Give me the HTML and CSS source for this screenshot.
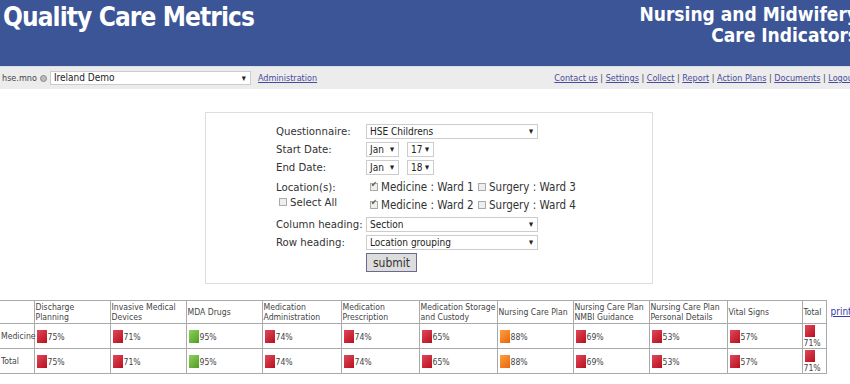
FILE: index.html
```html
<!DOCTYPE html>
<html lang="en">
<head>
    <meta charset="UTF-8">
    <title>Quality Care Metrics</title>
    <link rel="stylesheet" href="styles.css">
</head>
<body>
<div class="page">
    <div class="header">
        <div class="title">Quality Care Metrics</div>
        <div class="subtitle">Nursing and Midwifery<br>Care Indicators</div>
    </div>

    <div class="navbar">
        <div class="nav-left">
            <span>hse.mno</span>
            <span class="globe"></span>
            <span class="select wide">Ireland Demo</span>
            <a href="#">Administration</a>
        </div>
        <div class="nav-right">
            <a href="#">Contact us</a> | <a href="#">Settings</a> | <a href="#">Collect</a> | <a href="#">Report</a> | <a href="#">Action Plans</a> | <a href="#">Documents</a> | <a href="#">Logout</a>
        </div>
    </div>

    <form class="report-form">
        <div class="row">
            <label>Questionnaire:</label>
            <span class="select big">HSE Childrens</span>
        </div>
        <div class="row">
            <label>Start Date:</label>
            <span class="select month">Jan</span>
            <span class="select year">17</span>
        </div>
        <div class="row">
            <label>End Date:</label>
            <span class="select month">Jan</span>
            <span class="select year">18</span>
        </div>
        <div class="row locations">
            <div class="loc-label">
                <div>Location(s):</div>
                <div class="select-all"><span class="cb"></span>Select All</div>
            </div>
            <div class="loc-grid">
                <div><span class="cb on"></span>Medicine : Ward 1</div>
                <div><span class="cb"></span>Surgery : Ward 3</div>
                <div><span class="cb on"></span>Medicine : Ward 2</div>
                <div><span class="cb"></span>Surgery : Ward 4</div>
            </div>
        </div>
        <div class="row">
            <label>Column heading:</label>
            <span class="select big">Section</span>
        </div>
        <div class="row">
            <label>Row heading:</label>
            <span class="select big">Location grouping</span>
        </div>
        <div class="row">
            <label></label>
            <button type="button">submit</button>
        </div>
    </form>

    <div class="results">
        <table>
            <colgroup>
                <col style="width:34px"><col style="width:76px"><col style="width:76px"><col style="width:76px">
                <col style="width:79px"><col style="width:78px"><col style="width:78px"><col style="width:76px">
                <col style="width:76px"><col style="width:78px"><col style="width:75px"><col style="width:24px">
            </colgroup>
            <tr>
                <th></th>
                <th>Discharge Planning</th>
                <th>Invasive Medical Devices</th>
                <th>MDA Drugs</th>
                <th>Medication Administration</th>
                <th>Medication Prescription</th>
                <th>Medication Storage and Custody</th>
                <th>Nursing Care Plan</th>
                <th>Nursing Care Plan NMBI Guidance</th>
                <th>Nursing Care Plan Personal Details</th>
                <th>Vital Signs</th>
                <th>Total</th>
            </tr>
            <tr>
                <td class="rowhead">Medicine</td>
                <td><span class="sw red"></span>75%</td>
                <td><span class="sw red"></span>71%</td>
                <td><span class="sw green"></span>95%</td>
                <td><span class="sw red"></span>74%</td>
                <td><span class="sw red"></span>74%</td>
                <td><span class="sw red"></span>65%</td>
                <td><span class="sw orange"></span>88%</td>
                <td><span class="sw red"></span>69%</td>
                <td><span class="sw red"></span>53%</td>
                <td><span class="sw red"></span>57%</td>
                <td class="total"><span class="sw red"></span>71%</td>
            </tr>
            <tr>
                <td class="rowhead">Total</td>
                <td><span class="sw red"></span>75%</td>
                <td><span class="sw red"></span>71%</td>
                <td><span class="sw green"></span>95%</td>
                <td><span class="sw red"></span>74%</td>
                <td><span class="sw red"></span>74%</td>
                <td><span class="sw red"></span>65%</td>
                <td><span class="sw orange"></span>88%</td>
                <td><span class="sw red"></span>69%</td>
                <td><span class="sw red"></span>53%</td>
                <td><span class="sw red"></span>57%</td>
                <td class="total"><span class="sw red"></span>71%</td>
            </tr>
        </table>
        <a href="#" class="print">print</a>
    </div>
</div>
</body>
</html>
```

FILE: styles.css
```css
html {
    overflow: hidden;
}

body {
    margin: 0;
    font-family: "DejaVu Sans Condensed", "DejaVu Sans", sans-serif;
    color: #333;
    background: #fff;
}

.page {
    width: 858px;
}

.header {
    height: 66px;
    background-color: #3b5597;
    color: #fff;
    display: flex;
    justify-content: space-between;
    font-weight: bold;
}

.title {
    font-size: 26px;
    letter-spacing: -0.9px;
    padding: 2px 0 0 3px;
}

.subtitle {
    font-size: 19px;
    line-height: 21px;
    text-align: right;
    padding: 4px 0 0 0;
}

.navbar {
    height: 22px;
    border-top: 1px solid #d9dee8;
    background-color: #ececec;
    display: flex;
    justify-content: space-between;
    align-items: center;
    font-size: 9px;
    color: #444;
}

.navbar a {
    color: #4b4b9c;
}

.nav-left {
    display: flex;
    align-items: center;
    padding-left: 2px;
}

.nav-left a {
    margin-left: 7px;
}

.nav-right {
    padding-right: 2px;
}

.globe {
    box-sizing: border-box;
    width: 7px;
    height: 7px;
    border-radius: 50%;
    border: 1px solid #888;
    background: #bbb;
    margin: 0 3px 0 3px;
}

.select {
    position: relative;
    display: inline-block;
    box-sizing: border-box;
    height: 15px;
    line-height: 13px;
    border: 1px solid #ccc;
    background: #fff;
    padding-left: 3px;
    font-size: 10px;
    color: #222;
}

.select::after {
    content: "\25BE";
    position: absolute;
    right: 4px;
    top: 0;
    font-size: 9px;
}

.select.wide {
    width: 201px;
    height: 14px;
    line-height: 12px;
}

.report-form {
    box-sizing: border-box;
    width: 448px;
    height: 172px;
    margin: 23px auto 0;
    border: 1px solid #ddd;
    padding: 11px 0 0 70px;
    font-size: 11.3px;
    color: #333;
}

.row {
    display: flex;
    align-items: flex-start;
    height: 18px;
}

.row label {
    width: 90px;
    flex: none;
    white-space: nowrap;
    line-height: 15px;
}

.select.big {
    width: 172px;
}

.select.month {
    width: 33px;
    margin-right: 8px;
}

.select.year {
    width: 27px;
}

.row.locations {
    height: 39px;
}

.loc-label {
    width: 90px;
    line-height: 15px;
    padding-top: 2px;
}

.select-all {
    padding-left: 3px;
}

.loc-grid {
    display: grid;
    grid-template-columns: 108px auto;
    grid-auto-rows: 18px;
    line-height: 18px;
    padding-left: 4px;
    font-size: 11.5px;
}

.cb {
    display: inline-block;
    box-sizing: border-box;
    width: 8px;
    height: 8px;
    border: 1px solid #aaa;
    background: #eee;
    margin-right: 3px;
    vertical-align: 0;
    position: relative;
}

.cb.on::after {
    content: "\2714";
    position: absolute;
    left: 0;
    top: -5px;
    font-size: 8px;
    line-height: 12px;
    color: #555;
}

button {
    width: 51px;
    height: 19px;
    font-family: inherit;
    font-size: 12px;
    color: #333;
    background: #ddd;
    border: 1px solid #6a6a90;
    padding: 0;
}

.results {
    display: flex;
    align-items: flex-start;
    margin-top: 16px;
}

table {
    border-collapse: collapse;
    table-layout: fixed;
    width: 826px;
    font-size: 8.6px;
    color: #444;
}

th, td {
    border: 1px solid #aaa;
    padding: 1px 0 1px 1px;
    text-align: left;
    font-weight: normal;
    line-height: 10px;
}

th {
    height: 19px;
    vertical-align: middle;
}

td {
    height: 22px;
    vertical-align: middle;
}

th:first-child, td.rowhead {
    border-left: none;
}

.sw {
    display: inline-block;
    width: 10px;
    height: 13px;
    vertical-align: -3px;
    margin: 0 1px 0 1px;
}

.sw.red {
    background: linear-gradient(135deg, #e0485a, #b8101f);
}

.sw.green {
    background: linear-gradient(135deg, #8fd060, #4f9e22);
}

.sw.orange {
    background: linear-gradient(135deg, #ffa040, #e8650c);
}

td.total {
    vertical-align: top;
    padding-top: 1px;
    padding-bottom: 0;
}

td.total .sw {
    display: block;
    height: 12px;
    margin: 0 0 1px 1px;
}

.print {
    font-size: 10px;
    color: #3a3aa8;
    margin: 6px 0 0 4px;
}
```
